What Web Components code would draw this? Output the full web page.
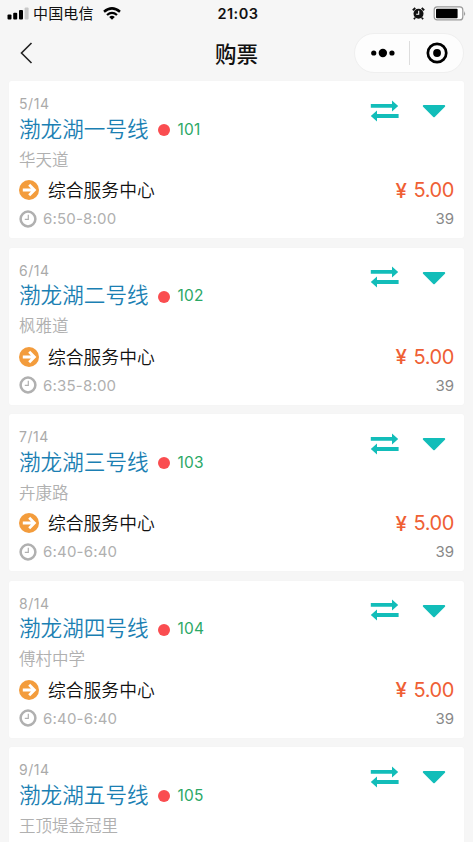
<!DOCTYPE html>
<html lang="zh-CN">
<head>
<meta charset="utf-8">
<title>购票</title>
<style>
html,body{margin:0;height:842px;overflow:hidden;background:#f6f6f6;font-family:Inter,"Noto Sans CJK SC",sans-serif}
</style>
</head>
<body>
<ticket-app></ticket-app>
<script>
class StatusBar extends HTMLElement{
  constructor(){super();this.attachShadow({mode:'open'}).innerHTML=`
<style>
:host{display:grid;grid-template-columns:1fr auto 1fr;align-items:center;height:26px;padding:0 7px;color:#111}
.l,.r{display:flex;align-items:center}
.r{justify-content:flex-end;gap:8px}
.c{font:15px/26px "Noto Sans CJK SC",sans-serif;margin:0 9px 0 4px;letter-spacing:.15px}
.t{font-size:14.5px;font-weight:600;letter-spacing:.5px;padding-left:3px}
svg{display:block}
</style>
<div class="l">
<svg width="22" height="13" viewBox="0 0 22 13"><g fill="#000"><rect x=".5" y="7.5" width="4" height="5" rx="1"/><rect x="6.2" y="5.8" width="4" height="6.7" rx="1"/><rect x="12" y="3" width="4" height="9.5" rx="1"/></g><rect x="17.6" y=".5" width="4" height="12" rx="1" fill="#c8c8c8"/></svg>
<span class="c">中国电信</span>
<svg width="18" height="13" viewBox="0 0 18 13" fill="none" stroke="#000"><path d="M1 4.8Q9-2 17 4.8" stroke-width="2.5"/><path d="M4 8Q9 3.7 14 8" stroke-width="2.3"/><path d="M6.2 10Q9 7.6 11.8 10L9 12.8Z" fill="#000" stroke="none"/></svg>
</div>
<span class="t">21:03</span>
<div class="r">
<svg width="13" height="13" viewBox="0 0 13 13"><circle cx="6.5" cy="6.7" r="5" fill="#111"/><path d="M.8 3.2L3.3 1M12.2 3.2L9.7 1M3 10.8L2 12.2M10 10.8L11 12.2" stroke="#111" stroke-width="1.8"/><path d="M6.7 3.8V7.2H4.2" fill="none" stroke="#fff" stroke-width="1.1"/></svg>
<svg width="33" height="15" viewBox="0 0 33 15"><rect x="1.2" y=".9" width="28.6" height="13" rx="3" fill="#fff" stroke="#999" stroke-width="1.2"/><rect x="3" y="2.7" width="21.6" height="9.6" rx="1" fill="#000"/><path d="M31.2 5Q33 7.5 31.2 10Z" fill="#888"/></svg>
</div>`}
}
customElements.define('status-bar',StatusBar);

class NavBar extends HTMLElement{
  constructor(){super();this.attachShadow({mode:'open'}).innerHTML=`
<style>
:host{display:grid;grid-template-columns:1fr auto 1fr;align-items:center;height:55px;padding:0 9px 2px 20px;box-sizing:border-box}
h1{margin:0;font:500 21.5px/30px "Noto Sans CJK SC",sans-serif;color:#111;padding-right:11px}
.pill{justify-self:end;display:flex;align-items:center;width:110px;height:40px;box-sizing:border-box;border:1px solid #efefef;border-radius:20px;background:#fdfdfd}
.pill svg{flex:1}
i{width:1px;height:24px;background:#ddd}
svg{display:block}
</style>
<svg width="13" height="22" viewBox="0 0 13 22"><path d="M11.5 1L1.5 11L11.5 21" fill="none" stroke="#222" stroke-width="1.6"/></svg>
<h1><slot></slot></h1>
<div class="pill">
<svg width="53" height="26" viewBox="0 0 53 26"><circle cx="18.5" cy="13" r="2.6"/><circle cx="27.6" cy="13" r="4.2"/><circle cx="36.7" cy="13" r="2.6"/></svg>
<i></i>
<svg width="53" height="26" viewBox="0 0 53 26"><circle cx="26.8" cy="13" r="9.2" fill="none" stroke="#000" stroke-width="2.7"/><circle cx="26.8" cy="13" r="3.9"/></svg>
</div>`}
}
customElements.define('nav-bar',NavBar);

class TicketCard extends HTMLElement{
  connectedCallback(){
    const a=n=>this.getAttribute(n), full=!this.hasAttribute('peek');
    this.attachShadow({mode:'open'}).innerHTML=`
<style>
:host{display:flex;justify-content:space-between;box-sizing:border-box;flex:none;height:157px;padding:13px 10px 0;background:#fff;border-radius:2px;box-shadow:0 0 1px rgba(0,0,0,.06)}
.col{display:flex;flex-direction:column}
.col>*{display:flex;align-items:center;white-space:nowrap}
.count{height:19px;padding-bottom:1px;font-size:14px;color:#aaa;letter-spacing:.55px}
.title{height:30px}
.name{font-size:21.6px;font-weight:350;line-height:30px;padding-bottom:1px;color:#1b7fb3}
.dot{width:12px;height:12px;border-radius:50%;background:#fa4d50;margin:2px 8px 0 9px}
.no{font-size:15.5px;color:#2ba866;letter-spacing:.2px}
.stop{height:29px;padding-bottom:1px;font-size:16.5px;font-weight:350;color:#b0b0b0}
.dest{height:32px;font-size:17.8px;font-weight:350;color:#111;gap:9px}
.dest span{padding-bottom:2px}
.time{height:25px;font-size:15px;color:#b0b0b0;gap:6px}
.time span{letter-spacing:.2px}
.right{align-items:flex-end}
.tools{height:33px;gap:23px;margin-right:8px}
.price{height:32px;margin-top:47px;color:#ef5f35;font-size:20px;letter-spacing:-.4px;gap:7px}
.yen{font-size:20.5px;font-weight:500}
.left{height:25px;font-size:15px;color:#888}
svg{display:block}
</style>
<div class="col">
<div class="count">${a('count')}</div>
<div class="title"><span class="name">${a('name')}</span><span class="dot"></span><span class="no">${a('no')}</span></div>
<div class="stop">${a('stop')}</div>
${full?`<div class="dest"><svg width="20" height="20" viewBox="0 0 20 20"><circle cx="10" cy="10" r="10" fill="#f39c3c"/><path d="M3.8 10H15M10.2 4.8L15.4 10L10.2 15.2" fill="none" stroke="#fff" stroke-width="2.8"/></svg><span><slot></slot></span></div>
<div class="time"><svg width="18" height="18" viewBox="0 0 18 18" fill="none" stroke="#b0b0b0"><circle cx="9" cy="9" r="7.4" stroke-width="2.5"/><path d="M9.3 4.8V9.4H5.8" stroke-width="1.2"/></svg><span>${a('time')}</span></div>`:''}
</div>
<div class="col right">
<div class="tools">
<svg width="29" height="22" viewBox="0 0 29 22" fill="#12bdb9"><path d="M.8 4H22V.4L28.2 6L22 11.4V7.8H.8ZM28.6 14.1H7V10.5L.8 16L7 21.6V17.9H28.6Z"/></svg>
<svg width="24" height="15" viewBox="0 0 24 15"><path d="M1.8 3H22.2L12 13.3Z" fill="#12bdb9" stroke="#12bdb9" stroke-width="2" stroke-linejoin="round"/></svg>
</div>
${full?`<div class="price"><span class="yen">¥</span><span>5.00</span></div>
<div class="left">39</div>`:''}
</div>`}
}
customElements.define('ticket-card',TicketCard);

class TicketApp extends HTMLElement{
  constructor(){super();
    const rows=[['5/14','渤龙湖一号线','101','华天道','6:50-8:00'],['6/14','渤龙湖二号线','102','枫雅道','6:35-8:00'],['7/14','渤龙湖三号线','103','卉康路','6:40-6:40'],['8/14','渤龙湖四号线','104','傅村中学','6:40-6:40'],['9/14','渤龙湖五号线','105','王顶堤金冠里','']];
    this.attachShadow({mode:'open'}).innerHTML=`
<style>
:host{display:block;height:842px;overflow:hidden}
main{display:flex;flex-direction:column;gap:9.6px;padding:0 9px}
</style>
<status-bar></status-bar><nav-bar>购票</nav-bar>
<main>${rows.map(r=>`<ticket-card count="${r[0]}" name="${r[1]}" no="${r[2]}" stop="${r[3]}" ${r[4]?`time="${r[4]}"`:'peek'}>${r[4]?'综合服务中心':''}</ticket-card>`).join('')}</main>`}
}
customElements.define('ticket-app',TicketApp);
</script>
</body>
</html>
